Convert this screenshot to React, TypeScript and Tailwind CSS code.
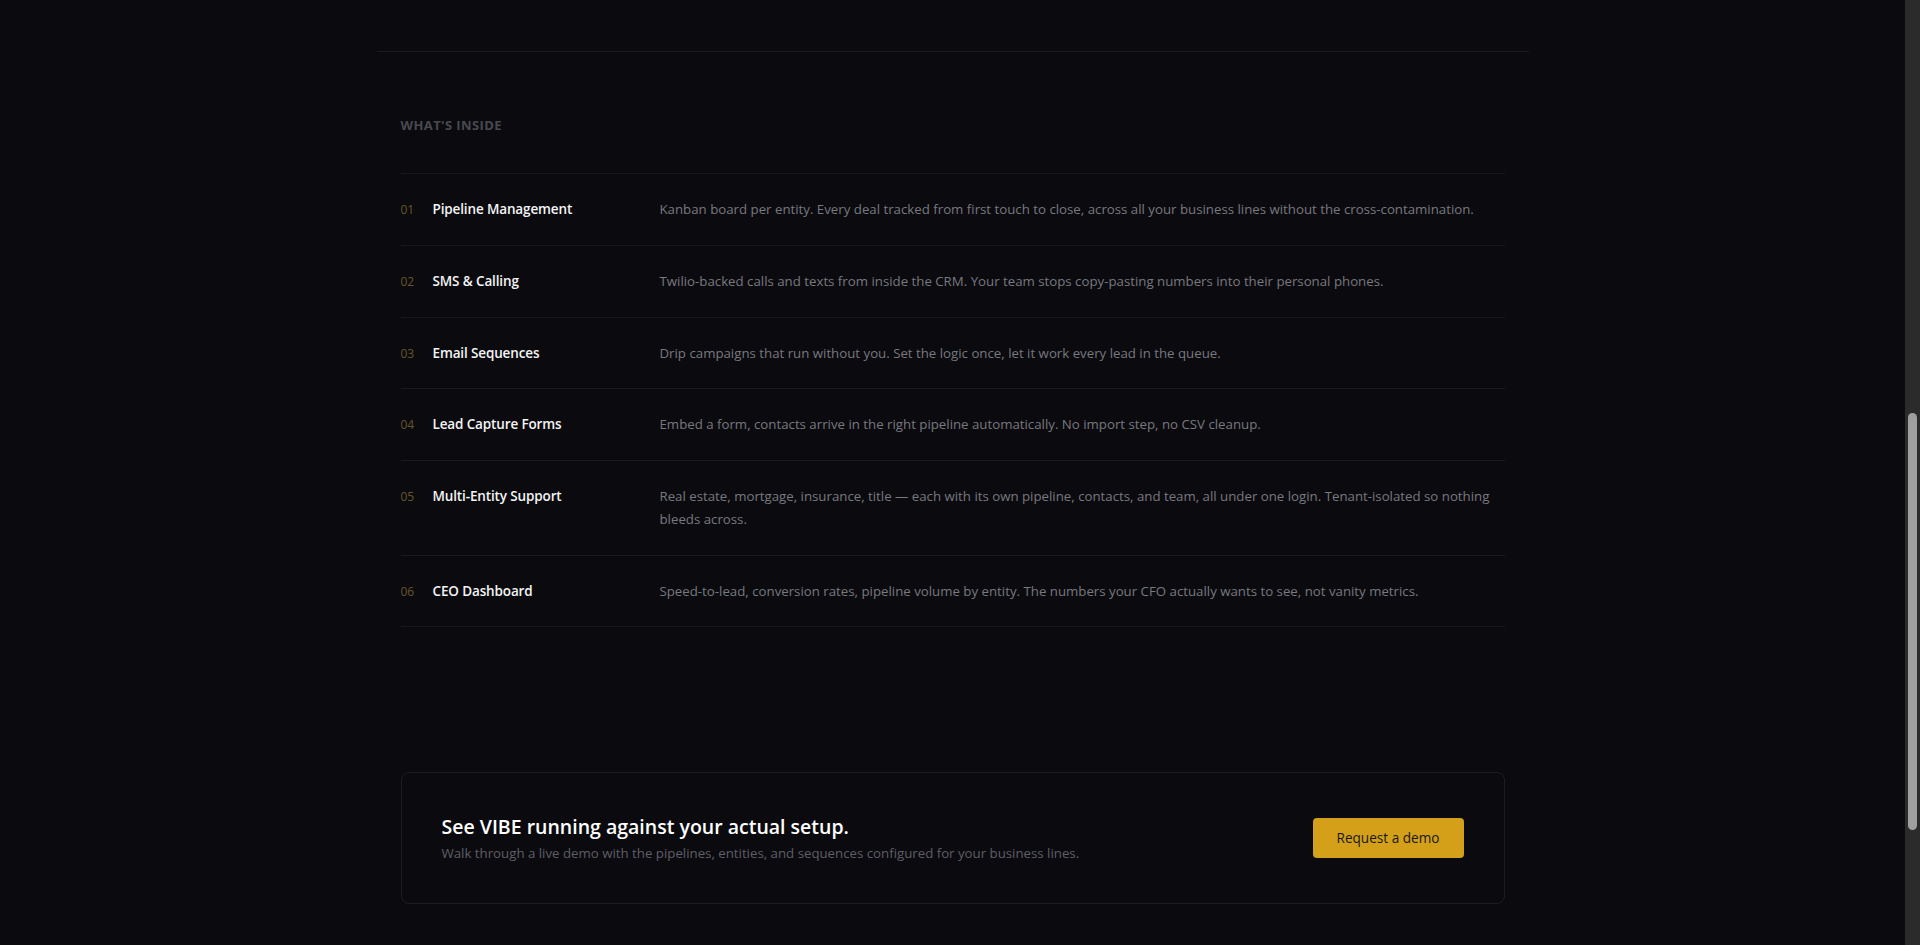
type Feature = { n: string; title: string; desc: string };

const features: Feature[] = [
  {
    n: "01",
    title: "Pipeline Management",
    desc: "Kanban board per entity. Every deal tracked from first touch to close, across all your business lines without the cross-contamination.",
  },
  {
    n: "02",
    title: "SMS & Calling",
    desc: "Twilio-backed calls and texts from inside the CRM. Your team stops copy-pasting numbers into their personal phones.",
  },
  {
    n: "03",
    title: "Email Sequences",
    desc: "Drip campaigns that run without you. Set the logic once, let it work every lead in the queue.",
  },
  {
    n: "04",
    title: "Lead Capture Forms",
    desc: "Embed a form, contacts arrive in the right pipeline automatically. No import step, no CSV cleanup.",
  },
  {
    n: "05",
    title: "Multi-Entity Support",
    desc: "Real estate, mortgage, insurance, title — each with its own pipeline, contacts, and team, all under one login. Tenant-isolated so nothing bleeds across.",
  },
  {
    n: "06",
    title: "CEO Dashboard",
    desc: "Speed-to-lead, conversion rates, pipeline volume by entity. The numbers your CFO actually wants to see, not vanity metrics.",
  },
];

function ScrollTrack() {
  // window scrollbar, page scrolled to the features block
  return (
    <aside className="flex w-[15px] shrink-0 justify-start bg-[#2b2b2b] pl-[3px] pt-[413px]">
      <div className="h-[417px] w-[9px] rounded-full bg-[#9f9f9f]" />
    </aside>
  );
}

export default function App() {
  return (
    <div className="flex h-screen overflow-hidden bg-[#0b0b0f] font-['Open_Sans',sans-serif] antialiased">
      <main className="min-w-0 flex-1">
        {/* bottom rule of the section above */}
        <div className="mx-auto h-[52px] max-w-6xl border-b border-[#1a1a20]" />

        <section className="mx-auto max-w-6xl px-6 pt-[65px]">
          <h2 className="text-[13px] leading-4 font-bold uppercase tracking-[0.03em] text-[#48484f]">
            What's inside
          </h2>

          <ul className="mt-[40px] border-t border-[#18181e]">
            {features.map((f) => (
              <li key={f.n} className="flex items-baseline border-b border-[#18181e] py-6">
                <span className="w-8 shrink-0 text-[12px] text-[#66552a]">{f.n}</span>
                <h3 className="w-[227px] shrink-0 text-[13.5px] font-semibold tracking-[-0.01em] text-[#f4f4f5]">
                  {f.title}
                </h3>
                <p className="flex-1 text-[13.25px] leading-[22.75px] text-[#78787f]">{f.desc}</p>
              </li>
            ))}
          </ul>
        </section>

        <section className="mx-auto max-w-6xl px-6 pt-[145px]">
          <div className="flex items-center justify-between rounded-lg border border-[#1d1d23] px-10 py-10">
            <div>
              <h2 className="text-[19.5px] leading-7 font-semibold text-white">
                See VIBE running against your actual setup.
              </h2>
              <p className="mt-0.5 text-[13.25px] leading-5 text-[#5e5e66]">
                Walk through a live demo with the pipelines, entities, and sequences configured for your
                business lines.
              </p>
            </div>
            <button className="h-10 rounded bg-[#d4a01a] px-6 text-[13.6px] font-medium text-[#18181b]">
              Request a demo
            </button>
          </div>
        </section>
      </main>
      <ScrollTrack />
    </div>
  );
}
